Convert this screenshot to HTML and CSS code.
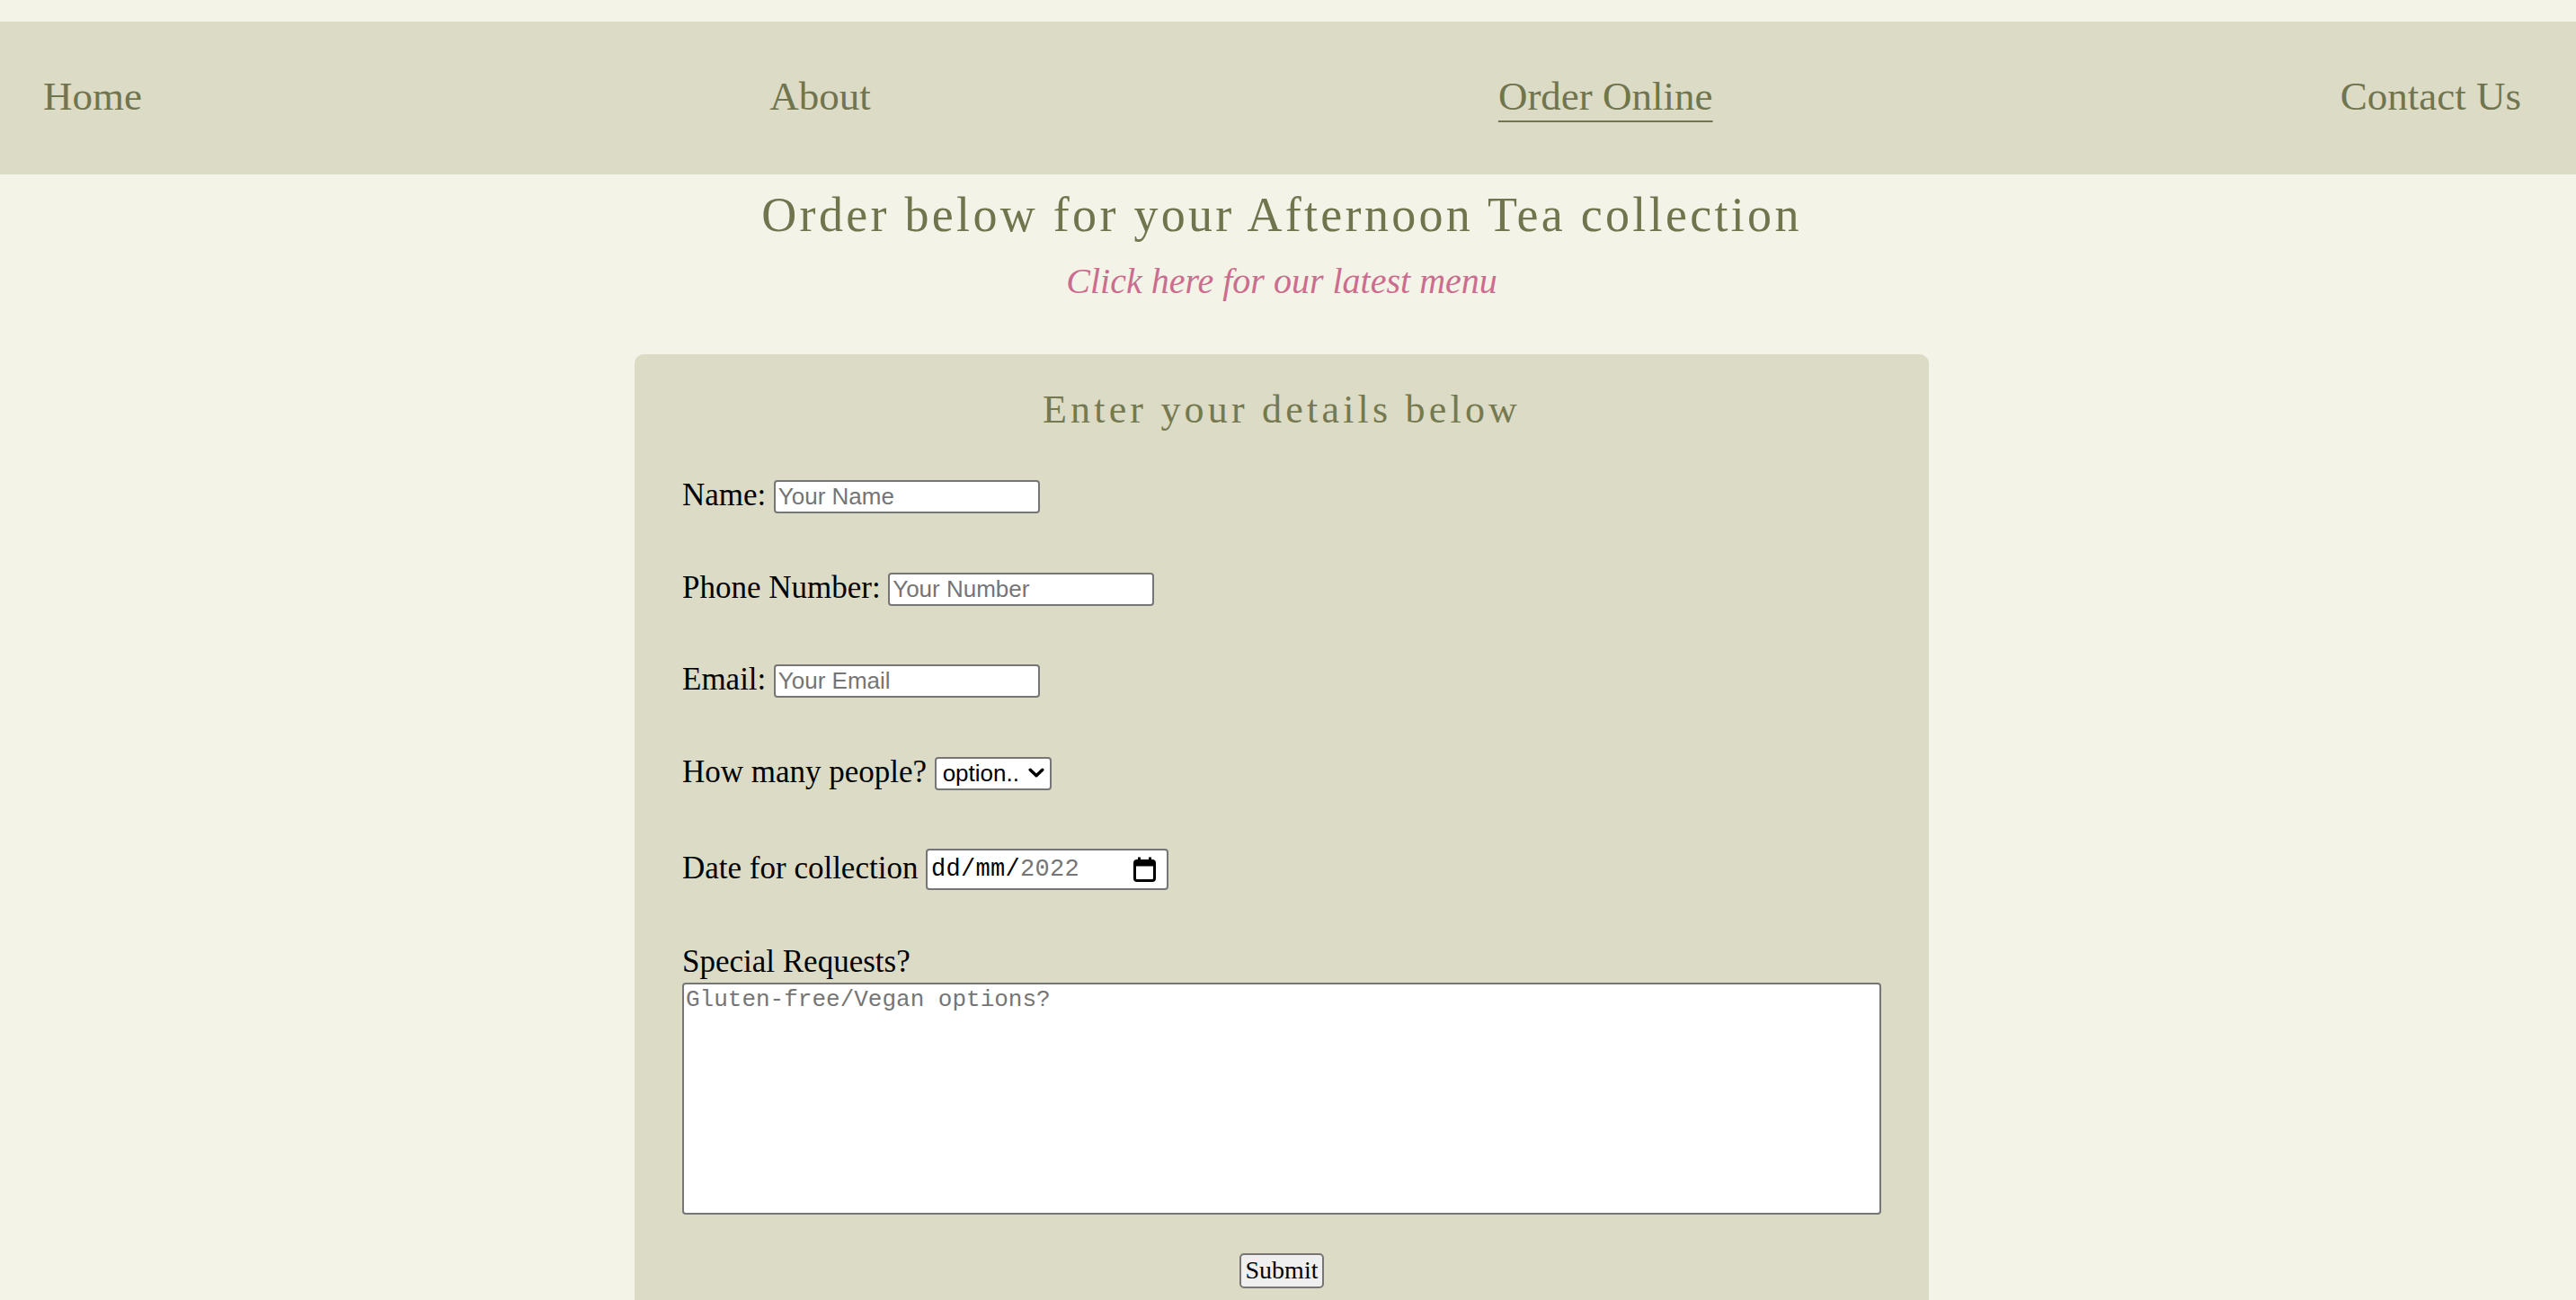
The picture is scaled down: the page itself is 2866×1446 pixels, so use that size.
FILE: index.html
```html
<!DOCTYPE html>
<html lang="en">
<head>
<meta charset="utf-8">
<title>Order Online</title>
<link rel="stylesheet" href="styles.css">
</head>
<body>
<header class="site-nav">
  <a class="nav-link" href="#">Home</a>
  <a class="nav-link" href="#">About</a>
  <a class="nav-link is-active" href="#">Order Online</a>
  <a class="nav-link" href="#">Contact Us</a>
</header>
<main class="page">
  <h1 class="page-title">Order below for your Afternoon Tea collection</h1>
  <p class="menu-line"><a class="menu-link" href="#">Click here for our latest menu</a></p>
  <section class="card">
    <h2 class="card-title">Enter your details below</h2>
    <form class="order-form">
      <div class="row">
        <label class="field-label" for="name">Name:</label>
        <input class="text-input" id="name" type="text" placeholder="Your Name">
      </div>
      <div class="row">
        <label class="field-label" for="phone">Phone Number:</label>
        <input class="text-input" id="phone" type="text" placeholder="Your Number">
      </div>
      <div class="row">
        <label class="field-label" for="email">Email:</label>
        <input class="text-input" id="email" type="text" placeholder="Your Email">
      </div>
      <div class="row">
        <label class="field-label" for="people">How many people?</label>
        <span class="select-wrap">
          <select class="select-input" id="people">
            <option>option..</option>
          </select>
          <svg class="chevron" viewBox="0 0 18 11" width="18" height="11"><path d="M2.2 2.2 L9 8.8 L15.8 2.2" fill="none" stroke="#000" stroke-width="3.4" stroke-linecap="round" stroke-linejoin="round"/></svg>
        </span>
      </div>
      <div class="row">
        <span class="field-label">Date for collection</span>
        <div class="date-input">
          <span class="date-text"><span class="date-dark">dd/mm/</span><span class="date-gray">2022</span></span>
          <svg class="cal-icon" viewBox="0 0 25 28" width="25" height="28">
            <rect x="1.5" y="4.5" width="22" height="22" rx="2.5" fill="none" stroke="#000" stroke-width="3"/>
            <rect x="1.5" y="4.5" width="22" height="6" fill="#000"/>
            <rect x="5" y="0.5" width="3" height="6" fill="#000"/>
            <rect x="17" y="0.5" width="3" height="6" fill="#000"/>
          </svg>
        </div>
      </div>
      <div class="special">
        <label class="field-label special-label" for="requests">Special Requests?</label>
        <textarea class="textarea" id="requests" placeholder="Gluten-free/Vegan options?"></textarea>
      </div>
      <div class="submit-row">
        <button class="submit-btn" type="submit">Submit</button>
      </div>
    </form>
  </section>
</main>
</body>
</html>
```

FILE: styles.css
```css
html, body {
  margin: 0;
  padding: 0;
}

body {
  background: #f3f3e7;
  font-family: "Liberation Serif", "Times New Roman", serif;
  color: #000;
}

.site-nav {
  margin-top: 24px;
  height: 170px;
  background: #dcdbc6;
  display: flex;
  justify-content: space-between;
  align-items: center;
  padding: 0 61px 0 48px;
}

.nav-link {
  font-size: 45px;
  color: #71754e;
  text-decoration: none;
  margin-top: -4px;
}

.nav-link.is-active {
  text-decoration: underline;
  text-decoration-thickness: 2px;
  text-underline-offset: 12px;
}

.page {
  padding-right: 14px;
}

.page-title {
  margin: 14px 0 0;
  text-align: center;
  font-size: 54px;
  font-weight: normal;
  letter-spacing: 3.3px;
  color: #71754e;
  line-height: 62px;
}

.menu-line {
  margin: 20px 0 0;
  text-align: center;
  font-size: 40px;
  line-height: 46px;
}

.menu-link {
  color: #cb6d8e;
  font-style: italic;
  text-decoration: none;
}

.card {
  width: 1440px;
  box-sizing: border-box;
  margin: 58px auto 0;
  background: #dcdbc6;
  border-radius: 10px;
  padding: 36px 53px 40px;
}

.card-title {
  margin: 0;
  text-align: center;
  font-size: 44px;
  font-weight: normal;
  letter-spacing: 4.2px;
  line-height: 51px;
  color: #75794f;
}

.order-form {
  margin-top: 53px;
  display: flex;
  flex-direction: column;
  gap: 65.5px;
}

.row {
  display: flex;
  align-items: center;
  gap: 8.5px;
}

.field-label {
  font-size: 35px;
  line-height: 31px;
  margin-bottom: 4px;
  color: #000;
}

.text-input {
  box-sizing: border-box;
  width: 296px;
  height: 37px;
  border: 2px solid #767676;
  border-radius: 4px;
  padding: 0 3px;
  font-family: "Liberation Sans", Arial, sans-serif;
  font-size: 26px;
  background: #fff;
  color: #000;
}

.text-input::placeholder,
.textarea::placeholder {
  color: #757575;
  opacity: 1;
}

.select-wrap {
  position: relative;
  display: inline-block;
}

.select-input {
  appearance: none;
  -webkit-appearance: none;
  box-sizing: border-box;
  width: 130px;
  height: 37px;
  border: 2px solid #767676;
  border-radius: 4px;
  padding: 0 0 0 7px;
  background: #fff;
  font-family: "Liberation Sans", Arial, sans-serif;
  font-size: 26px;
  color: #000;
  display: block;
}

.chevron {
  position: absolute;
  right: 8px;
  top: 12px;
  pointer-events: none;
}

.date-input {
  box-sizing: border-box;
  width: 270px;
  height: 46px;
  border: 2px solid #767676;
  border-radius: 4px;
  background: #fff;
  display: flex;
  align-items: center;
  justify-content: space-between;
  padding: 0 12px 0 4px;
}

.date-text {
  font-family: "Liberation Mono", "Courier New", monospace;
  font-size: 27px;
  letter-spacing: 0.3px;
  line-height: 1;
  margin-top: 1px;
}

.date-dark {
  color: #000;
}

.date-gray {
  color: #757575;
}

.cal-icon {
  display: block;
}

.special {
  margin-top: -2px;
  display: flex;
  flex-direction: column;
  align-items: flex-start;
}

.special-label {
  margin-bottom: 8px;
}

.textarea {
  box-sizing: border-box;
  display: block;
  width: 100%;
  height: 258px;
  border: 2px solid #767676;
  border-radius: 4px;
  padding: 2px;
  font-family: "Liberation Mono", "Courier New", monospace;
  font-size: 26px;
  background: #fff;
  resize: none;
  margin: 0;
}

.submit-row {
  margin-top: -22.5px;
  display: flex;
  justify-content: center;
}

.submit-btn {
  box-sizing: border-box;
  height: 39px;
  min-width: 94px;
  padding: 0 5px;
  border: 2px solid #767676;
  border-radius: 5px;
  background: #efefef;
  font-family: "Liberation Serif", "Times New Roman", serif;
  font-size: 28px;
  color: #000;
  line-height: 1;
}
```
